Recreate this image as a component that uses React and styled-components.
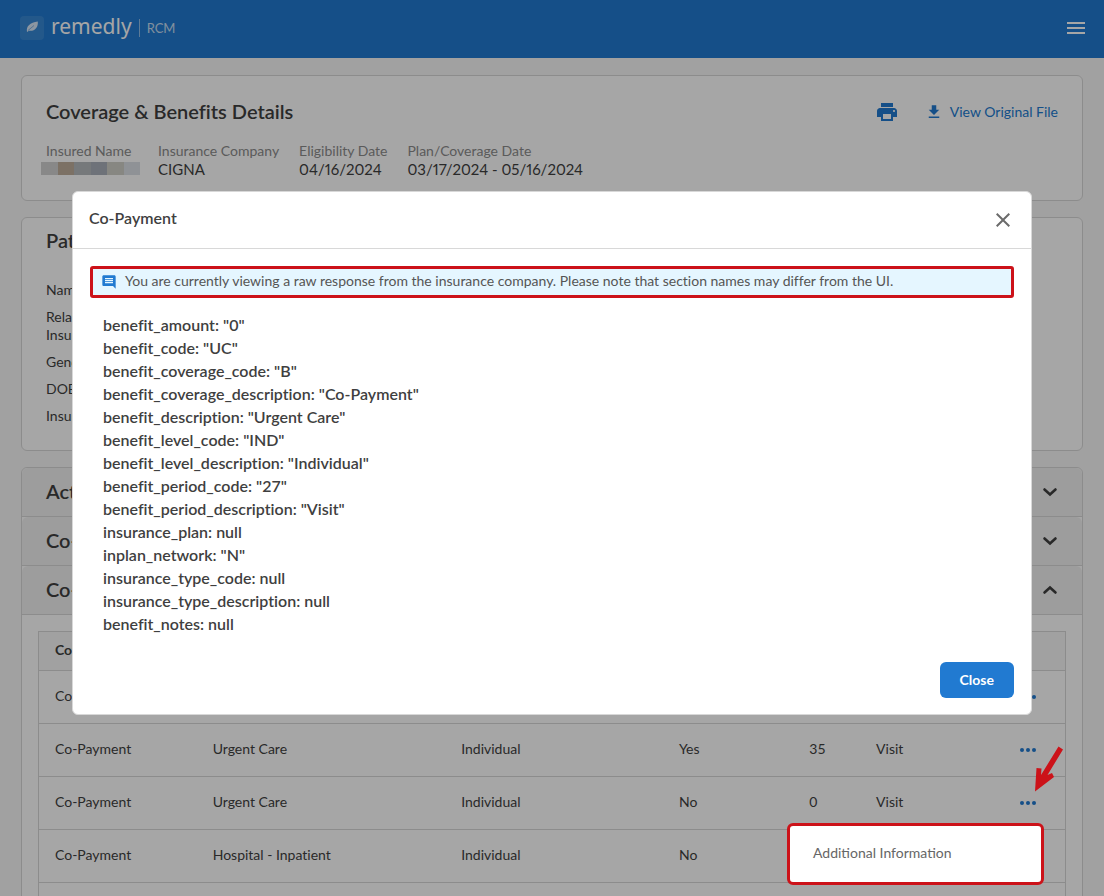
import React from 'react';
import styled, { createGlobalStyle } from 'styled-components';
import { MdClose, MdComment, MdFileDownload, MdMenu, MdPrint } from 'react-icons/md';

const GlobalStyle = createGlobalStyle`
  * {
    box-sizing: border-box;
  }
  body {
    margin: 0;
    background: #f8f8f8;
    color: #3f3f3f;
    font-family: Lato, 'Liberation Sans', sans-serif;
    font-size: 14px;
    font-variant-ligatures: none;
    line-height: 18px;
  }
  button {
    font-family: inherit;
    cursor: pointer;
  }
`;

const Page = styled.div`
  height: 100vh;
  overflow: hidden;
`;

const TopBar = styled.header`
  display: flex;
  align-items: center;
  height: 58px;
  padding: 0 16px 2px 20px;
  background: #217ad1;
  color: #fff;
`;

const LogoMark = styled.svg`
  width: 24px;
  height: 24px;
  margin-right: 7px;
`;

const Brand = styled.span`
  padding-bottom: 4px;
  font-family: 'Noto Sans', sans-serif;
  font-size: 21px;
  line-height: 24px;
`;

const Product = styled.span`
  margin-left: 7px;
  padding-left: 7px;
  border-left: 1px solid rgba(255, 255, 255, 0.5);
  color: rgba(255, 255, 255, 0.75);
  font-size: 13px;
`;

const IconButton = styled.button`
  display: flex;
  margin-left: ${({ $push }) => ($push ? 'auto' : '0')};
  padding: 0;
  border: 0;
  background: none;
  color: ${({ $color }) => $color};
  font-size: 24px;
`;

const Content = styled.main`
  display: flex;
  flex-direction: column;
  gap: 16px;
  padding: 17px 21px;
`;

const Card = styled.section`
  padding: ${({ $padding }) => $padding};
  border: 1px solid #d8d8d8;
  border-radius: 6px;
  background: #fff;
`;

const CardHead = styled.div`
  display: flex;
  align-items: center;
  justify-content: space-between;
`;

const Title = styled.h2`
  margin: 0;
  padding-bottom: 2px;
  font-size: 20px;
  font-weight: 600;
  line-height: 24px;
`;

const Actions = styled.div`
  display: flex;
  align-items: center;
  gap: 26px;
`;

const FileLink = styled.a`
  display: flex;
  align-items: center;
  gap: 7px;
  color: #217ad1;
  font-size: 14px;
  text-decoration: none;

  svg {
    font-size: 18px;
  }
`;

const Facts = styled.dl`
  display: flex;
  gap: 20px;
  margin: 17px 0 0;
`;

const Fact = styled.div`
  dt {
    color: #8c8c8c;
  }
  dd {
    margin: 0;
    font-size: 15px;
    font-variant-numeric: proportional-nums;
  }
`;

const Redacted = styled.span`
  display: flex;
  width: 99px;
  height: 13px;
  margin: 2px -2px 0 -5px;
`;

const Block = styled.span`
  flex: 1;
  background: ${({ $color }) => $color};
`;

const PatientFields = styled.ul`
  display: flex;
  flex-direction: column;
  gap: 9px;
  margin: 27px 0 0;
  padding: 0;
  list-style: none;
`;

const PatientField = styled.li`
  width: 100px;
`;

const Accordion = styled(Card)`
  padding: 0;
`;

const AccordionHead = styled.button`
  display: flex;
  align-items: center;
  justify-content: space-between;
  width: 100%;
  height: 49px;
  padding: 0 24px;
  border: 0;
  border-bottom: 1px solid #d8d8d8;
  border-radius: 6px 6px 0 0;
  background: #f2f2f2;
  color: inherit;
`;

const Chevron = styled.svg`
  width: 16px;
  height: 10px;
  transform: ${({ $open }) => ($open ? 'rotate(180deg)' : 'none')};
`;

const AccordionBody = styled.div`
  padding: 16px;
`;

const Table = styled.table`
  width: 100%;
  border: 1px solid #d8d8d8;
  border-collapse: collapse;
  table-layout: fixed;
`;

const Th = styled.th`
  width: ${({ $width }) => $width};
  height: 39px;
  padding: 0 16px 2px;
  background: #f8f8f8;
  text-align: left;
`;

const Td = styled.td`
  height: 53px;
  padding: 0 16px 2px;
  border-top: 1px solid #d8d8d8;
`;

const MenuAnchor = styled.div`
  position: relative;
`;

const DotsButton = styled.button`
  display: flex;
  align-items: center;
  gap: 2px;
  height: 20px;
  padding: 2px 0 0;
  border: 0;
  background: none;
`;

const Dot = styled.span`
  width: 4px;
  height: 4px;
  border-radius: 50%;
  background: #217ad1;
`;

const RowMenu = styled.div`
  position: absolute;
  z-index: 20;
  top: 31px;
  right: 5px;
  width: 257px;
  border: 3px solid #cc1219;
  border-radius: 6px;
  background: #fff;
`;

const MenuItem = styled.button`
  width: 100%;
  height: 56px;
  padding: 0 23px 4px;
  border: 0;
  background: none;
  color: #666;
  font-size: 14px;
  text-align: left;
`;

const Arrow = styled.svg`
  position: absolute;
  z-index: 20;
  left: 12px;
  bottom: 19px;
  width: 32px;
  height: 48px;
`;

const Backdrop = styled.div`
  position: fixed;
  z-index: 10;
  inset: 0;
  padding: 191px 72px 0;
  background: rgba(0, 0, 0, 0.35);
`;

const Modal = styled.div`
  border: 1px solid #d8d8d8;
  border-radius: 6px;
  background: #fff;
`;

const ModalHead = styled.div`
  display: flex;
  align-items: center;
  justify-content: space-between;
  height: 57px;
  padding: 0 16px;
  border-bottom: 1px solid #d8d8d8;
`;

const ModalTitle = styled.h1`
  margin: 0;
  padding-bottom: 4px;
  font-size: 16px;
  font-weight: 600;
  line-height: 20px;
`;

const ModalBody = styled.div`
  padding: 17px 17px 16px;
`;

const Notice = styled.p`
  display: flex;
  align-items: center;
  gap: 8px;
  height: 32px;
  margin: 0;
  padding: 0 8px;
  border: 3px solid #cc1219;
  border-radius: 3px;
  background: #e5f6ff;
  color: #555;

  svg {
    flex: none;
    color: #217ad1;
    font-size: 16px;
  }
`;

const NoticeText = styled.span`
  padding-bottom: 2px;
`;

const ResponseList = styled.ul`
  margin: 15px 13px 27px;
  padding: 0;
  font-size: 16px;
  font-weight: 600;
  line-height: 23px;
  list-style: none;
`;

const ModalActions = styled.div`
  display: flex;
  justify-content: flex-end;
`;

const CloseButton = styled.button`
  height: 36px;
  padding: 0 20px 2px;
  border: 0;
  border-radius: 6px;
  background: #217ad1;
  color: #fff;
  font-size: 14px;
  font-weight: 700;
`;

const NAME_BLOCKS = ['#d2d2d2', '#bfae9b', '#b6bbbe', '#aab0bb', '#cfd0c8', '#dce1e6'];

const PATIENT_FIELDS = ['Name', 'Relationship to Insured', 'Gender', 'DOB', 'Insurance'];

const COLUMNS = [
  ['Coverage', '15.4%'],
  ['Service', '24.2%'],
  ['Level', '21.2%'],
  ['Network', '12.7%'],
  ['', '6.5%'],
  ['', '14%'],
  ['', '6%'],
];

const ROWS = [
  ['Co-Payment', 'Urgent Care', 'Individual', 'No', '0', 'Visit'],
  ['Co-Payment', 'Urgent Care', 'Individual', 'Yes', '35', 'Visit'],
  ['Co-Payment', 'Urgent Care', 'Individual', 'No', '0', 'Visit'],
  ['Co-Payment', 'Hospital - Inpatient', 'Individual', 'No', '', ''],
  ['', '', '', '', '', ''],
];

const OPEN_ROW = 2;

const RESPONSE = {
  benefit_amount: '0',
  benefit_code: 'UC',
  benefit_coverage_code: 'B',
  benefit_coverage_description: 'Co-Payment',
  benefit_description: 'Urgent Care',
  benefit_level_code: 'IND',
  benefit_level_description: 'Individual',
  benefit_period_code: '27',
  benefit_period_description: 'Visit',
  insurance_plan: null,
  inplan_network: 'N',
  insurance_type_code: null,
  insurance_type_description: null,
  benefit_notes: null,
};

const Section = ({ title, open, children }) => (
  <>
    <AccordionHead aria-expanded={!!open}>
      <Title as='span'>{title}</Title>
      <Chevron viewBox='0 0 16 10' $open={open}>
        <path
          d='M2.5 2.5 8 7.5l5.5-5'
          fill='none'
          stroke='#3f3f3f'
          strokeWidth='2.6'
          strokeLinecap='round'
        />
      </Chevron>
    </AccordionHead>
    {children}
  </>
);

const RowActions = ({ open }) => (
  <MenuAnchor>
    <DotsButton aria-label='Row actions'>
      <Dot />
      <Dot />
      <Dot />
    </DotsButton>
    {open && (
      <>
        <Arrow viewBox='0 0 32 48'>
          <path
            d='M26.500 1.500 31 4.500 15.500 30 20 28 22 32 3 46.500 4.500 23 9.500 23.500 9 30Z'
            fill='#cc1219'
          />
        </Arrow>
        <RowMenu>
          <MenuItem>Additional Information</MenuItem>
        </RowMenu>
      </>
    )}
  </MenuAnchor>
);

const App = () => (
  <Page>
    <GlobalStyle />
    <TopBar>
      <LogoMark viewBox='0 0 24 24'>
        <rect width='24' height='24' rx='4' fill='#fff' fillOpacity='0.1' />
        <path d='M7 16C6 10 10 6.500 17.800 5.500 18.500 11 15 15.500 9 14.800Z' fill='#fff' fillOpacity='0.8' />
        <path d='M8 14.500 14 9.500' stroke='#217ad1' strokeOpacity='0.5' />
      </LogoMark>
      <Brand>remedly</Brand>
      <Product>RCM</Product>
      <IconButton aria-label='Menu' $color='#fff' $push>
        <MdMenu />
      </IconButton>
    </TopBar>
    <Content>
      <Card $padding='23px 24px 22px'>
        <CardHead>
          <Title>Coverage &amp; Benefits Details</Title>
          <Actions>
            <IconButton aria-label='Print' $color='#217ad1'>
              <MdPrint />
            </IconButton>
            <FileLink href='#file'>
              <MdFileDownload />
              View Original File
            </FileLink>
          </Actions>
        </CardHead>
        <Facts>
          <Fact>
            <dt>Insured Name</dt>
            <dd>
              <Redacted>
                {NAME_BLOCKS.map((color) => (
                  <Block key={color} $color={color} />
                ))}
              </Redacted>
            </dd>
          </Fact>
          <Fact>
            <dt>Insurance Company</dt>
            <dd>CIGNA</dd>
          </Fact>
          <Fact>
            <dt>Eligibility Date</dt>
            <dd>04/16/2024</dd>
          </Fact>
          <Fact>
            <dt>Plan/Coverage Date</dt>
            <dd>03/17/2024 - 05/16/2024</dd>
          </Fact>
        </Facts>
      </Card>
      <Card $padding='10px 24px 25px'>
        <Title>Patient</Title>
        <PatientFields>
          {PATIENT_FIELDS.map((field) => (
            <PatientField key={field}>{field}</PatientField>
          ))}
        </PatientFields>
      </Card>
      <Accordion>
        <Section title='Active Coverage' />
        <Section title='Co-Insurance' />
        <Section title='Co-Payment' open>
          <AccordionBody>
            <Table>
              <thead>
                <tr>
                  {COLUMNS.map(([label, width], i) => (
                    <Th key={i} $width={width}>
                      {label}
                    </Th>
                  ))}
                </tr>
              </thead>
              <tbody>
                {ROWS.map((row, i) => (
                  <tr key={i}>
                    {row.map((cell, j) => (
                      <Td key={j}>{cell}</Td>
                    ))}
                    <Td>
                      <RowActions open={i === OPEN_ROW} />
                    </Td>
                  </tr>
                ))}
              </tbody>
            </Table>
          </AccordionBody>
        </Section>
      </Accordion>
    </Content>
    <Backdrop>
      <Modal role='dialog' aria-labelledby='modal-title'>
        <ModalHead>
          <ModalTitle id='modal-title'>Co-Payment</ModalTitle>
          <IconButton aria-label='Close dialog' $color='#6b6b6b'>
            <MdClose />
          </IconButton>
        </ModalHead>
        <ModalBody>
          <Notice>
            <MdComment />
            <NoticeText>
              You are currently viewing a raw response from the insurance company. Please note that
              section names may differ from the UI.
            </NoticeText>
          </Notice>
          <ResponseList>
            {Object.entries(RESPONSE).map(([key, value]) => (
              <li key={key}>
                {key}: {JSON.stringify(value)}
              </li>
            ))}
          </ResponseList>
          <ModalActions>
            <CloseButton>Close</CloseButton>
          </ModalActions>
        </ModalBody>
      </Modal>
    </Backdrop>
  </Page>
);

export default App;
